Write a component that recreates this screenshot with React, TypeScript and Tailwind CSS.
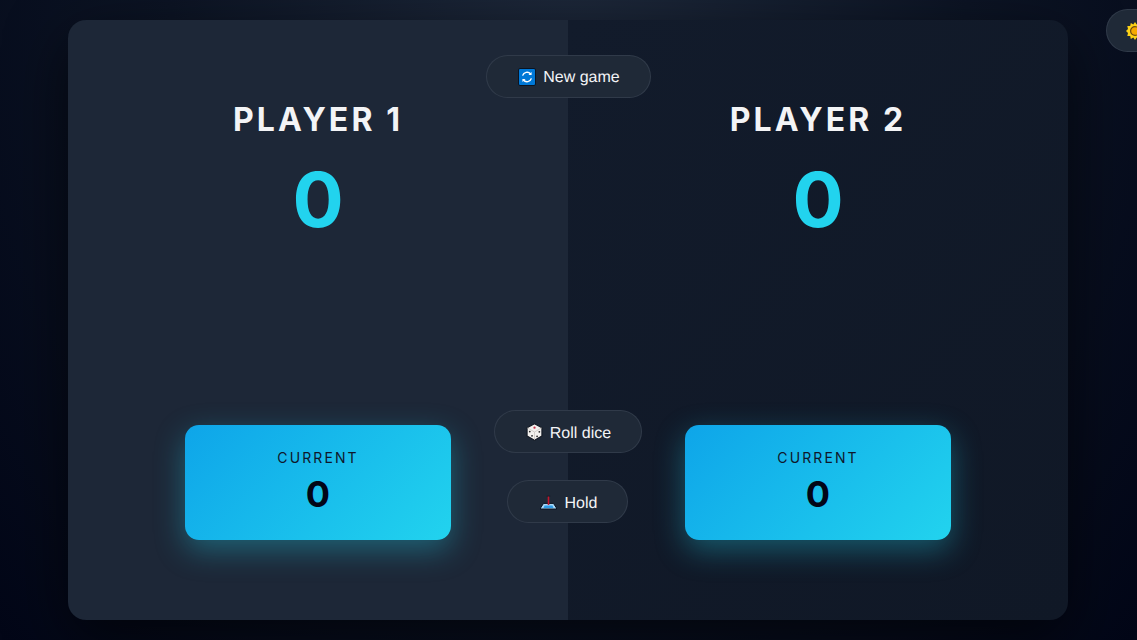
const btn = "absolute flex items-center justify-center gap-[7px] rounded-full border border-[#94a3b826] bg-[#1f2937] h-[43px] pt-[1px] pl-[1px] text-[16px] text-[#f3f4f6] font-['Liberation_Sans',Arial,sans-serif] [text-rendering:geometricPrecision]";

function RefreshIcon() {
  return (
    <svg width="18" height="18" viewBox="0 0 18 18" aria-hidden="true">
      <rect x="0.5" y="0.5" width="17" height="17" rx="1.5" fill="#0078d7" stroke="#0a1422" />
      <path d="M4.6 7.6A4.6 4.6 0 0 1 12.6 6" fill="none" stroke="#fff" strokeWidth="1.4" />
      <path d="M13.4 10.4A4.6 4.6 0 0 1 5.4 12" fill="none" stroke="#fff" strokeWidth="1.4" />
      <path d="M13.6 3.9v3.2h-3.2zM4.4 14.1v-3.2h3.2z" fill="#fff" />
    </svg>
  );
}

function DiceIcon() {
  return (
    <svg width="17" height="18" viewBox="0.8 0 14.4 16" aria-hidden="true">
      <path d="M8 .7 14.6 4.2 14.6 11.6 8 15.3 1.4 11.6 1.4 4.2Z" fill="#f3f1ee" stroke="#141a24" strokeWidth="1" strokeLinejoin="round" />
      <path d="M1.8 4.4 8 8 14.2 4.4M8 8v7" fill="none" stroke="#c9c5c0" strokeWidth="0.7" />
      <circle cx="8" cy="4.2" r="1" fill="#c8324a" />
      <circle cx="3.8" cy="7.6" r=".8" fill="#2b2b2b" />
      <circle cx="5.8" cy="11.4" r=".8" fill="#2b2b2b" />
      <circle cx="10.3" cy="11.8" r=".8" fill="#2b2b2b" />
      <circle cx="12.3" cy="7.8" r=".8" fill="#2b2b2b" />
    </svg>
  );
}

function JoystickIcon() {
  return (
    <svg width="19" height="18" viewBox="0 0 18 18" aria-hidden="true">
      <path d="M1 15 4 10.4H14L17 15V16H1Z" fill="#a9d8f5" stroke="#0b1320" strokeWidth="1" strokeLinejoin="round" />
      <path d="M5 12.6h8L14 15H4Z" fill="#2f9be6" />
      <rect x="8.2" y="3" width="1.6" height="9" fill="#c3162b" />
      <rect x="7.2" y="2.5" width="3.6" height="1.4" fill="#141a24" opacity="0.55" />
    </svg>
  );
}

function SunIcon() {
  return (
    <svg width="18" height="18" viewBox="0 0 18 18" aria-hidden="true">
      <path d="M9 0l1.7 2.4L13.2 1l.6 2.9 2.9.2-.7 2.8L18 9l-2 2.1.7 2.8-2.9.2-.6 2.9-2.5-1.4L9 18l-1.7-2.4L4.8 17l-.6-2.9-2.9-.2.7-2.8L0 9l2-2.1-.7-2.8 2.9-.2L4.8 1l2.5 1.4Z" fill="#fcd116" />
      <circle cx="9" cy="9" r="4.4" fill="#f5a800" stroke="#6b4a10" strokeWidth="1.2" />
    </svg>
  );
}

function Player({ name, left }: { name: string; left: boolean }) {
  return (
    <section className={`flex flex-1 flex-col items-center ${left ? "bg-[#1d2737]" : "bg-[linear-gradient(135deg,#121b2b,#101826)]"}`}>
      <h2 className="mt-[78px] h-[44px] text-[32px] leading-[44px] font-bold tracking-[3.1px] text-[#f3f4f6]">{name}</h2>
      <div className="mt-[9px] h-[96px] text-[76px] leading-[96px] font-bold text-[#22d3ee]">0</div>
      <div className="mt-[178px] flex h-[115px] w-[266px] flex-col items-center rounded-[14px] bg-[linear-gradient(135deg,#0ea5e9,#22d3ee)] pt-[24px] shadow-[0_10px_30px_rgba(34,211,238,0.35)]">
        <div className="text-[14px] leading-[18px] tracking-[2.1px] text-[#0f172a]">CURRENT</div>
        <div className="mt-[4px] text-[36px] leading-[46px] font-bold text-[#020617]">0</div>
      </div>
    </section>
  );
}

export default function App() {
  return (
    <div className="relative flex h-[640px] w-[1137px] items-center overflow-hidden bg-[radial-gradient(ellipse_at_50%_-10%,#1e293b_0%,#0c1424_50%,#020617_100%)] pl-[68px] font-['Inter','Noto_Sans',sans-serif]">
      <main className="relative flex h-[600px] w-[1000px] overflow-hidden rounded-[18px]">
        <Player name="PLAYER 1" left />
        <Player name="PLAYER 2" left={false} />
        <button className={`${btn} top-[35px] left-[418px] w-[165px]`}><RefreshIcon /><span className="pt-[2px]">New game</span></button>
        <button className={`${btn} top-[390px] left-[426px] w-[148px]`}><DiceIcon /><span className="pt-[3px]">Roll dice</span></button>
        <button className={`${btn} top-[460px] left-[439px] w-[121px]`}><JoystickIcon /><span className="pt-[3px]">Hold</span></button>
      </main>
      <div className="pointer-events-none absolute top-[20px] left-[68px] h-[600px] w-[1000px] rounded-[18px] shadow-[0_20px_60px_rgba(0,0,0,0.6)]" />
      <button className={`${btn} top-[9px] left-[1106px] h-[38px] w-[80px] !justify-start overflow-hidden !pl-[19px] !pt-0`}><SunIcon /></button>
    </div>
  );
}
